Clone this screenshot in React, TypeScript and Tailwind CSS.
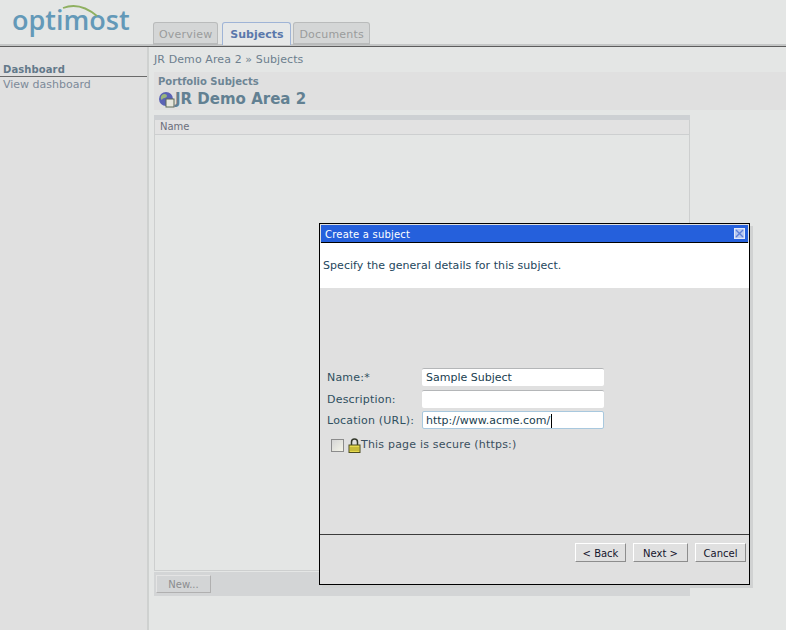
import React from "react";

const font = { fontFamily: '"DejaVu Sans", Verdana, sans-serif' };

function Tab({ label, active }: { label: string; active?: boolean }) {
  return active ? (
    <div className="mr-[-2px] h-[23px] w-[69px] rounded-t-[3px] border border-b-0 border-[#9fb4d6] bg-[#e6e8e8] text-center text-[11px] font-bold leading-[23px] text-[#5a78ab]">
      {label}
    </div>
  ) : (
    <div className="h-[23px] rounded-t-[3px] border border-b-2 border-[#b9bbbb] bg-[#d4d6d6] px-[5px] text-center text-[11px] leading-[23px] tracking-[0.2px] text-[#9a9c9c]">
      {label}
    </div>
  );
}

function Field({ label, value, focused, className }: { label: string; value?: string; focused?: boolean; className?: string }) {
  return (
    <div className={"flex h-[18px] items-start " + (className ?? "")}>
      <div className="h-[18px] w-[95px] pt-[3px] text-[11px] leading-[14px] tracking-[0.2px] text-[#2f4f5f]">{label}</div>
      <div
        className={
          "flex h-[18px] w-[182px] items-center rounded-[2px] bg-white pt-px text-[11px] leading-[14px] text-[#20404f] " +
          (focused ? "border border-[#a8c8de] pl-[3px]" : "border-t border-[#b4b6b8] pl-[4px]")
        }
      >
        {value}
        {focused && <span className="ml-[1px] h-[14px] w-px bg-black" />}
      </div>
    </div>
  );
}

function DlgButton({ label, w }: { label: string; w: string }) {
  return (
    <div
      className={
        "flex h-[19px] items-center justify-center border border-b-[#8d8d8d] border-l-white border-r-[#8d8d8d] border-t-white pt-px text-[10px] text-[#14142c] " +
        w
      }
    >
      {label}
    </div>
  );
}

export default function App() {
  return (
    <div className="relative flex h-[630px] w-[786px] flex-col overflow-hidden bg-[#e4e6e5]" style={font}>
      <header className="flex h-[47px] items-end border-b border-b-[#5c5c5c] shadow-[inset_0_-2px_0_#c4c6c6]">
        <div className="relative h-[46px] w-[153px] shrink-0">
          <div
            className="absolute left-[12px] top-0 text-[27px] font-semibold leading-[40px] text-[#6399b8]"
            style={{ fontFamily: '"Open Sans", sans-serif' }}
          >
            optimost
          </div>
          <svg className="absolute left-[60px] top-[4px]" width="40" height="14" viewBox="0 0 40 14">
            <path d="M3 4 C12 0.5 24 1 37 12" fill="none" stroke="#8fb060" strokeWidth="1.8" />
          </svg>
        </div>
        <div className="mb-[1px] flex gap-[4px]">
          <Tab label="Overview" />
          <Tab label="Subjects" active />
          <Tab label="Documents" />
        </div>
      </header>

      <div className="flex min-h-0 flex-1">
        <aside className="w-[149px] shrink-0 border-r-2 border-[#cfd1d0] bg-[#e0e0e0] pt-[16px]">
          <div className="border-b border-[#6a6a6a] pl-[3px] text-[10px] font-bold leading-[13px] tracking-[0.1px] text-[#63798a]">
            Dashboard
          </div>
          <div className="pl-[3px] pt-px text-[11px] leading-[14px] text-[#7d8a99]">View dashboard</div>
        </aside>

        <main className="min-w-0 flex-1 pl-[5px]">
          <div className="pt-[6px] text-[11px] leading-[14px] tracking-[0.1px] text-[#6d7f8e]">JR Demo Area 2 » Subjects</div>
          <div className="mt-[5px] h-[38px] bg-[#e0e0e0] pl-[4px] pt-[3px]">
            <div className="text-[10px] font-bold leading-[13px] text-[#6d8595]">Portfolio Subjects</div>
            <div className="flex items-center pt-px">
              <svg width="17" height="17" viewBox="0 0 17 17" className="shrink-0">
                <circle cx="8" cy="8" r="7" fill="#5a63b5" />
                <path d="M4 4 C6 2 9 3 9 5 C8 8 5 6 4 9 C2 8 3 5 4 4Z" fill="#9ab77b" />
                <rect x="8" y="8" width="8" height="8" fill="#e6e6dc" stroke="#5c6a58" />
              </svg>
              <span className="text-[15px] font-bold leading-[20px] text-[#628092]">JR Demo Area 2</span>
            </div>
          </div>

          <div className="mt-[5px] flex h-[481px] w-[536px] flex-col">
            <div className="h-[5px] bg-[#cdd0d3]" />
            <div className="flex min-h-0 flex-1 flex-col border-x border-b border-[#cdcfcf]">
              <div className="h-[15px] border-b border-[#cdcfd0] bg-[#e2e2e2] pl-[5px] text-[10px] leading-[14px] text-[#6b6f7c]">
                Name
              </div>
            </div>
            <div className="mt-px h-[24px] shrink-0 bg-[#d3d5d6] pl-[2px] pt-[3px]">
              <div className="flex h-[18px] w-[55px] items-center justify-center border border-b-[#b0b0b0] border-l-[#e4e4e4] border-r-[#b0b0b0] border-t-[#e4e4e4] text-[10px] text-[#8b8d8f]">
                New...
              </div>
            </div>
          </div>
        </main>
      </div>

      <div className="absolute left-[319px] top-[223px] flex h-[362px] w-[431px] flex-col border border-black bg-[#e0e0e0] shadow-[3px_3px_0_#d0d2d2]">
        <div className="mx-px mt-px flex h-[18px] shrink-0 items-center justify-between border-b border-black bg-[#2560dc] pl-[4px] pr-[3px] text-[10px] tracking-[0.2px] text-white">
          <span className="pt-px">Create a subject</span>
          <svg width="11" height="11" viewBox="0 0 11 11">
            <rect width="11" height="11" fill="#b9c9ef" />
            <rect x="0.5" y="0.5" width="10" height="10" fill="none" stroke="#e3e9fa" />
            <path d="M2 2 L9 9 M9 2 L2 9" stroke="#5f80d8" strokeWidth="1.4" />
          </svg>
        </div>
        <div className="flex h-[45px] shrink-0 items-center bg-white pl-[3px] pt-px text-[11px] tracking-[0.05px] text-[#24465c]">
          Specify the general details for this subject.
        </div>
        <div className="flex min-h-0 flex-1 flex-col justify-end">
          <div className="flex flex-col gap-[3px] pb-[7px] pl-[7px]">
            <Field label="Name:*" value="Sample Subject" className="mb-px" />
            <Field label="Description:" />
            <Field label="Location (URL):" value="http://www.acme.com/" focused />
          </div>
          <div className="flex h-[18px] items-center pl-[11px]">
            <div className="h-[13px] w-[13px] border border-[#8c8c8c] bg-gradient-to-br from-[#d5d5d5] to-[#f4f4e8]" />
            <svg width="13" height="15" viewBox="0 0 13 15" className="ml-[4px] shrink-0">
              <path d="M3.5 7 V4 a3 3 0 0 1 6 0 V7" fill="none" stroke="#33382a" strokeWidth="1.5" />
              <rect x="1" y="7" width="11" height="7.5" fill="#e6da4e" stroke="#4d4d20" />
              <path d="M2 10h9 M2 12h9" stroke="#a89c24" />
            </svg>
            <span className="text-[11px] tracking-[0.2px] text-[#3a4f5e]">This page is secure (https:)</span>
          </div>
          <div className="mt-[80px] h-[50px] border-t border-[#3c3c3c] pr-[3px] pt-[8px]">
            <div className="flex justify-end gap-[7px]">
              <DlgButton label="< Back" w="w-[51px]" />
              <DlgButton label="Next >" w="w-[55px]" />
              <DlgButton label="Cancel" w="w-[51px]" />
            </div>
          </div>
        </div>
      </div>
    </div>
  );
}
